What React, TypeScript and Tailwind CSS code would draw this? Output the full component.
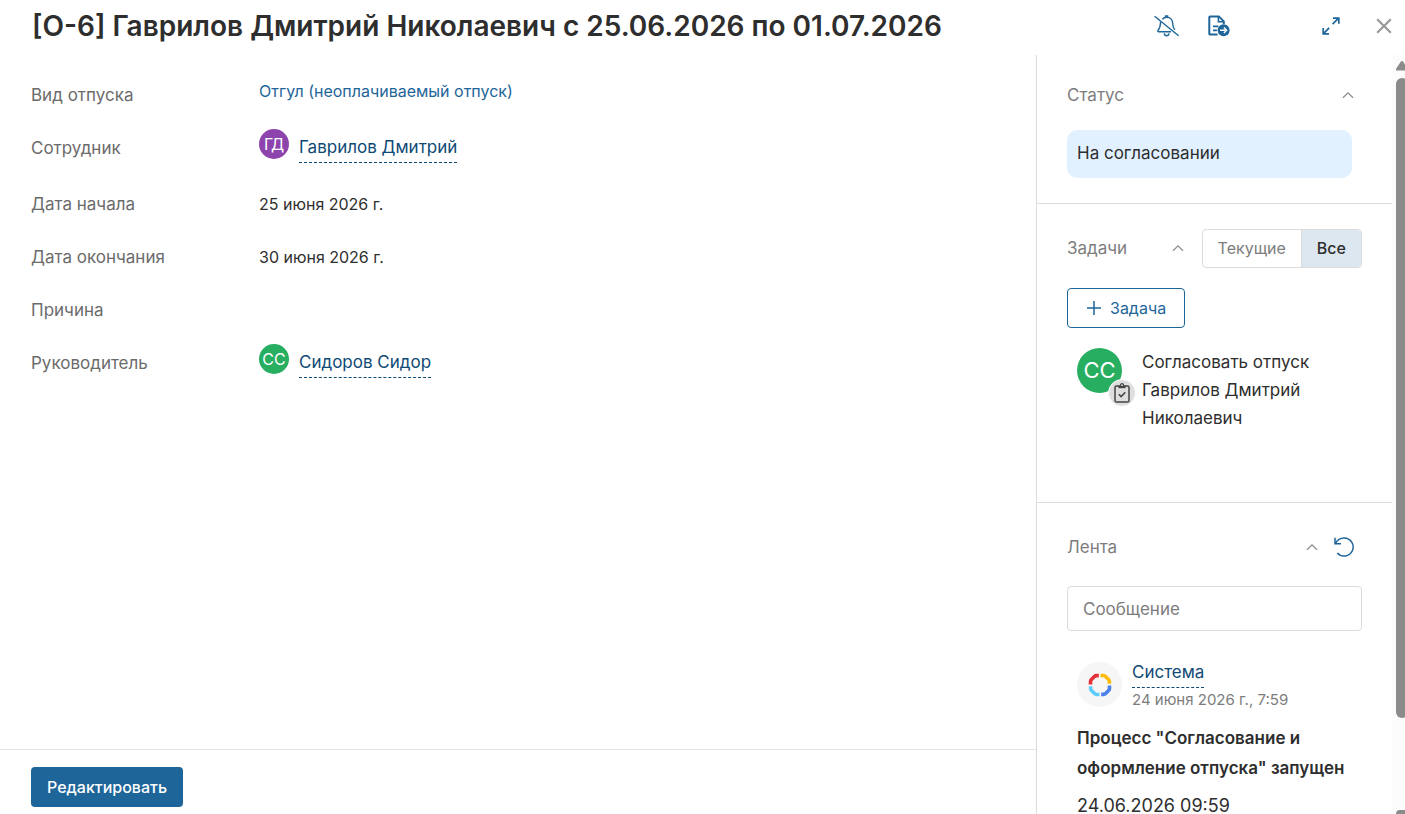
import type { ReactNode } from "react";

interface Field {
    label: string;
    type: "link" | "user" | "text";
    value: string;
    initials?: string;
    color?: string;
}

const fields: Field[] = [
    { label: "Вид отпуска", type: "link", value: "Отгул (неоплачиваемый отпуск)" },
    { label: "Сотрудник", type: "user", value: "Гаврилов Дмитрий", initials: "ГД", color: "bg-[#8e44ad]" },
    { label: "Дата начала", type: "text", value: "25 июня 2026 г." },
    { label: "Дата окончания", type: "text", value: "30 июня 2026 г." },
    { label: "Причина", type: "text", value: "" },
    { label: "Руководитель", type: "user", value: "Сидоров Сидор", initials: "СС", color: "bg-[#27ae60]" },
];

function BellOffIcon() {
    return (
        <svg className="w-[26px] h-[22px]" fill="none" stroke="currentColor" strokeWidth={1.4} viewBox="0 0 26 22">
            <path d="M.6 1.2l24 19.6" />
            <path d="M8.4 4.4C9.3 3 10.800 2.300 12.600 2.300c4 0 6.100 2.800 6.100 6.200 0 2.600.7 4.600 2.100 6.400" />
            <path d="M6.600 6.600c-.2 4.300-.5 6.600-2.500 8.600-.6.7-.3 1.600.6 1.600H17" />
            <path d="M11.600 2V1h2v1M10.200 18.400c.2 1.500 1.100 2.300 2.400 2.300s2.200-.8 2.400-2.300" />
        </svg>
    );
}

function DocumentExportIcon() {
    return (
        <svg className="w-[22px] h-[22px]" fill="none" viewBox="0 0 22 22">
            <path d="M9.5 19.6H2.2a.9.9 0 01-.9-.9V2.3c0-.5.4-.9.9-.9h8.6l5 5V9" stroke="currentColor" strokeWidth={2} />
            <path d="M10.4 1.6v5.2h5.2M5 11.4h5.4M5 15.4h3.8" stroke="currentColor" strokeWidth={1.6} />
            <circle cx="15.6" cy="15.2" r="6" fill="currentColor" />
            <path d="M12 15.2h6.4M15.9 12.4l2.8 2.8-2.8 2.8" stroke="white" strokeWidth={1.4} />
        </svg>
    );
}

function ExpandIcon() {
    return (
        <svg className="w-[18px] h-[18px]" fill="none" stroke="currentColor" strokeWidth={1.7} viewBox="0 0 18 18">
            <path d="M10.6 7.2l6-6M11 1.2h5.8v5.6M7.2 10.8l-6 6M1.2 11v5.8H7" />
        </svg>
    );
}

function CloseIcon() {
    return (
        <svg className="w-4 h-4" fill="none" stroke="currentColor" strokeWidth={2.2} viewBox="0 0 16 16">
            <path d="M1.2 1.2l13.6 13.6M14.8 1.2L1.2 14.8" />
        </svg>
    );
}

function ChevronUp() {
    return (
        <svg className="w-3 h-2" fill="none" stroke="currentColor" strokeWidth={1.3} viewBox="0 0 12 8">
            <path d="M1 6.8l5-5 5 5" />
        </svg>
    );
}

function RefreshIcon() {
    return (
        <svg className="w-5 h-5" fill="none" stroke="currentColor" strokeWidth={1.5} viewBox="0 0 20 20">
            <path d="M1 .8v6h6" />
            <path d="M1.2 6.6C3.2 2.8 6.4.9 10.2.9a9.1 9.1 0 11-6.9 15.2" />
        </svg>
    );
}

function ClipboardIcon() {
    return (
        <svg className="w-4 h-5" fill="none" stroke="currentColor" strokeWidth={1.5} viewBox="0 0 16 20">
            <rect x="1" y="3" width="14" height="16" rx="1.6" />
            <path d="M4.400 2.800h7.200v2.400H4.400z" fill="currentColor" stroke="none" />
            <circle cx="8" cy="2.200" r="1.500" fill="#dedede" strokeWidth={1.3} />
            <path d="M4.800 11.200l2.300 2.400 4.200-4.400" />
        </svg>
    );
}

function SystemLogo() {
    return (
        <svg className="w-6 h-6" fill="none" strokeWidth={3.6} viewBox="0 0 24 24">
            <path d="M2.5 11.5V8.600c0-.9.3-1.500.9-2.100l3-3c.6-.6 1.200-.9 2.100-.9h2.300" stroke="#e63037" />
            <path d="M2.5 11.5V8.600c0-.9.3-1.500.9-2.100l3-3c.6-.6 1.200-.9 2.100-.9h2.300" transform="rotate(90 12 12)" stroke="#fbbc0a" />
            <path d="M2.5 11.5V8.600c0-.9.3-1.500.9-2.100l3-3c.6-.6 1.200-.9 2.100-.9h2.300" transform="rotate(180 12 12)" stroke="#4a80e8" />
            <path d="M2.5 11.5V8.600c0-.9.3-1.500.9-2.100l3-3c.6-.6 1.200-.9 2.100-.9h2.300" transform="rotate(270 12 12)" stroke="#5ccdfc" />
        </svg>
    );
}

function FieldValue({ field }: { field: Field }) {
    if (field.type === "link") {
        return (
            <a href="#" className="mt-1 text-base leading-6 text-[#1e6599]">
                {field.value}
            </a>
        );
    }
    if (field.type === "user") {
        return (
            <div className="flex items-start gap-2.5">
                <span className={`mt-px flex w-[30px] h-[30px] items-center justify-center rounded-full text-base text-white ${field.color}`}>
                    {field.initials}
                </span>
                <a href="#" className="mt-1 border-b border-dashed border-[#0f4a75] text-[17px] leading-[30px] text-[#0f4a75]">
                    {field.value}
                </a>
            </div>
        );
    }
    return <span className="mt-2 text-base leading-6">{field.value}</span>;
}

function SectionTitle({ title, children }: { title: string; children?: ReactNode }) {
    return (
        <div className="flex h-10 items-center justify-between">
            <h2 className="text-[17px] leading-6 text-[#7d7d7d]">{title}</h2>
            <div className="flex items-center text-[#8f8f8f]">{children}</div>
        </div>
    );
}

export default function App() {
    return (
        <div className="flex h-screen flex-col overflow-hidden bg-white font-['Inter','Noto_Sans',sans-serif] text-[#2e2e2e]">
            <header className="flex h-[55px] shrink-0 items-center justify-between pb-[3px] pl-8 pr-[13px]">
                <h1 className="truncate text-[28px] leading-9 font-semibold">
                    [О-6] Гаврилов Дмитрий Николаевич с 25.06.2026 по 01.07.2026
                </h1>
                <div className="flex shrink-0 items-center text-[#1e6599]">
                    <button aria-label="Отключить уведомления" className="mr-7">
                        <BellOffIcon />
                    </button>
                    <button aria-label="Выгрузить документ" className="mr-[92px]">
                        <DocumentExportIcon />
                    </button>
                    <button aria-label="Развернуть" className="mr-9">
                        <ExpandIcon />
                    </button>
                    <button aria-label="Закрыть" className="text-[#999999]">
                        <CloseIcon />
                    </button>
                </div>
            </header>

            <div className="flex min-h-0 flex-1">
                <main className="flex min-w-0 flex-1 flex-col">
                    <dl className="flex-1 px-[31px] pt-5">
                        {fields.map((field) => (
                            <div key={field.label} className={`flex items-start ${field.type === "user" ? "h-14" : "h-[53px]"}`}>
                                <dt className="w-[228px] shrink-0 pt-2 text-[17px] leading-6 text-[#6b6b6b]">{field.label}</dt>
                                <dd className="flex">
                                    <FieldValue field={field} />
                                </dd>
                            </div>
                        ))}
                    </dl>
                    <footer className="border-t border-[#e4e4e4] px-[31px] pt-[17px] pb-[7px]">
                        <button className="h-10 rounded bg-[#1e6599] px-4 text-base font-medium text-white">Редактировать</button>
                    </footer>
                </main>

                <aside className="flex w-[369px] shrink-0 border-l border-[#dcdcdc]">
                    <div className="min-w-0 flex-1 overflow-hidden">
                        {/* Status */}
                        <section className="border-b border-[#dcdcdc] px-[30px] pt-5 pb-[25px]">
                            <SectionTitle title="Статус">
                                <button aria-label="Свернуть статус" className="mr-2">
                                    <ChevronUp />
                                </button>
                            </SectionTitle>
                            <div className="mt-[15px] mr-2.5 flex h-12 items-center rounded-[10px] bg-[#e1f1ff] px-2.5 text-[17px]">На согласовании</div>
                        </section>

                        {/* Tasks */}
                        <section className="h-[299px] border-b border-[#dcdcdc] px-[30px] pt-6">
                            <SectionTitle title="Задачи">
                                <button aria-label="Свернуть задачи" className="mr-[18px]">
                                    <ChevronUp />
                                </button>
                                <div className="flex h-[39px] overflow-hidden rounded border border-[#dcdcdc] text-base">
                                    <button className="px-[15px] text-[#7d7d7d]">Текущие</button>
                                    <button className="border-l border-[#dcdcdc] bg-[#dde7f0] px-[15px] font-medium text-[#2e2e2e]">Все</button>
                                </div>
                            </SectionTitle>
                            <button className="mt-5 flex h-10 items-center gap-2 rounded border border-[#1e6599] px-[18px] text-base text-[#1e6599]">
                                <svg className="w-4 h-4" fill="none" stroke="currentColor" strokeWidth={1.5} viewBox="0 0 16 16">
                                    <path d="M8 1v14M1 8h14" />
                                </svg>
                                Задача
                            </button>
                            <div className="mt-5 flex pl-2.5">
                                <div className="relative mr-5 flex w-[45px] h-[45px] shrink-0 items-center justify-center rounded-full bg-[#27ae60] text-[22px] text-white">
                                    СС
                                    <span className="absolute -right-3.5 -bottom-3.5 flex w-7 h-7 items-center justify-center rounded-full border border-white bg-[#dedede] text-[#444444]">
                                        <ClipboardIcon />
                                    </span>
                                </div>
                                <p className="w-[190px] text-[17px] leading-7">Согласовать отпуск Гаврилов Дмитрий Николаевич</p>
                            </div>
                        </section>

                        {/* Feed */}
                        <section className="px-[30px] pt-6">
                            <SectionTitle title="Лента">
                                <button aria-label="Свернуть ленту" className="mr-4">
                                    <ChevronUp />
                                </button>
                                <button aria-label="Обновить" className="mr-2 text-[#1e6599]">
                                    <RefreshIcon />
                                </button>
                            </SectionTitle>
                            <input
                                type="text"
                                aria-label="Сообщение"
                                placeholder="Сообщение"
                                className="mt-[19px] block h-[45px] w-full rounded border border-[#dcdcdc] px-[15px] text-[17px] outline-none placeholder:text-[#7d7d7d]"
                            />
                            <article className="pt-[29px] pl-2.5">
                                <div className="flex items-start gap-2.5">
                                    <span className="mt-0.5 flex w-[45px] h-[45px] items-center justify-center rounded-full bg-[#f6f6f6]">
                                        <SystemLogo />
                                    </span>
                                    <div className="flex flex-col items-start">
                                        <a href="#" className="h-7 border-b border-dashed border-[#0f4a75] text-[17px] leading-6 text-[#0f4a75]">Система</a>
                                        <time className="text-[15px] leading-6 text-[#7d7d7d]">24 июня 2026 г., 7:59</time>
                                    </div>
                                </div>
                                <h3 className="mt-[11px] text-[17px] leading-[30px] font-semibold">Процесс "Согласование и оформление отпуска" запущен</h3>
                                <p className="mt-2 text-lg leading-[30px]">24.06.2026 09:59</p>
                            </article>
                        </section>
                    </div>

                    {/* Scrollbar */}
                    <div className="flex w-[13px] shrink-0 flex-col overflow-hidden bg-[#fcfcfc] pt-1.5 pl-1 text-[#8b8b8b]">
                        <svg className="w-3 h-2.5 shrink-0" fill="currentColor" viewBox="0 0 12 10">
                            <path d="M6 0c.6 0 1 .3 1.3.8l4.2 7c.5.9.2 1.7-.8 1.7H.8C-.2 9.500-.5 8.700.1 7.800l4.600-7C5 .3 5.400 0 6 0z" />
                        </svg>
                        <div className="mt-[7px] h-[640px] w-3 shrink-0 rounded-md bg-[#8b8b8b]" />
                        <div className="flex-1" />
                        <div className="h-1 w-3 shrink-0 rounded-t bg-[#8b8b8b]" />
                    </div>
                </aside>
            </div>
        </div>
    );
}
